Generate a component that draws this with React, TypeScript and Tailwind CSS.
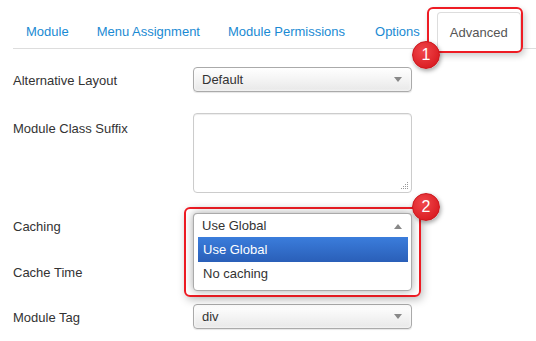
import React from "react";

const font = { fontFamily: '"Liberation Sans", Arial, sans-serif' };

function Arrow({ up = false }: { up?: boolean }) {
  return (
    <svg width="8" height="5" viewBox="0 0 8 5" className="shrink-0">
      {up ? <path d="M0 5 L4 0 L8 5 Z" fill="#888" /> : <path d="M0 0 L8 0 L4 5 Z" fill="#888" />}
    </svg>
  );
}

function Select({ value }: { value: string }) {
  return (
    <div className="flex h-[25px] w-[219px] items-center justify-between rounded-[4px] border border-[#aaa] bg-gradient-to-b from-white via-[#f4f4f4] to-[#e8e8e8] pl-[8px] pr-[9px] text-[13px] text-[#333] shadow-[0_0_3px_#fff_inset,0_1px_1px_rgba(0,0,0,0.1)]">
      <span>{value}</span>
      <Arrow />
    </div>
  );
}

function Badge({ n }: { n: string }) {
  return (
    <div className="absolute flex h-[28px] w-[28px] items-center justify-center rounded-full border border-[#c9161c] bg-[radial-gradient(circle_at_40%_35%,#f0474b,#dc2026_70%,#c8161c)] text-[16px] leading-none text-white shadow-[1px_2px_4px_rgba(0,0,0,0.35)]">
      {n}
    </div>
  );
}

export default function App() {
  const tabs = [
    { t: "Module", m: "mr-[2px]" },
    { t: "Menu Assignment", m: "mr-[2px]" },
    { t: "Module Permissions", m: "mr-[4px]" },
    { t: "Options", m: "mr-[4px]" },
  ];
  return (
    <div className="relative h-[341px] w-[536px] overflow-hidden bg-white text-[13px] text-[#333]" style={font}>
      {/* Tabs */}
      <div className="ml-[13px] mt-[12px] flex h-[37px] border-b border-[#ddd]">
        {tabs.map(({ t, m }) => (
          <div key={t} className={`${m} flex h-[36px] items-center px-[13px] pt-[3px] text-[13px] text-[#1a8ad3]`}>
            {t}
          </div>
        ))}
        <div className="relative -mb-px flex h-[37px] items-center rounded-t-[4px] border border-b-0 border-[#ddd] bg-white px-[12px] pt-[3px] text-[#555]">
          Advanced
        </div>
      </div>

      {/* Form */}
      <div className="pl-[13px]">
        <div className="mt-[18px] flex items-center">
          <div className="w-[180px] pt-[2px]">Alternative Layout</div>
          <Select value="Default" />
        </div>

        <div className="mt-[21px] flex items-start">
          <div className="w-[180px] pt-[6px]">Module Class Suffix</div>
          <div className="relative h-[80px] w-[219px] rounded-[4px] border border-[#ccc] bg-white shadow-[inset_0_1px_1px_rgba(0,0,0,0.075)]">
            <svg width="8" height="8" viewBox="0 0 8 8" className="absolute bottom-[2px] right-[2px]">
              <g fill="#999">
                <rect x="6" y="0" width="1" height="1" />
                <rect x="4" y="2" width="1" height="1" />
                <rect x="6" y="2" width="1" height="1" />
                <rect x="2" y="4" width="1" height="1" />
                <rect x="4" y="4" width="1" height="1" />
                <rect x="6" y="4" width="1" height="1" />
                <rect x="0" y="6" width="1" height="1" />
                <rect x="2" y="6" width="1" height="1" />
                <rect x="4" y="6" width="1" height="1" />
                <rect x="6" y="6" width="1" height="1" />
              </g>
            </svg>
          </div>
        </div>

        <div className="mt-[20px] flex items-center">
          <div className="w-[180px] pt-[2px]">Caching</div>
          <div className="relative z-10">
            <Select value="Use Global" />
            {/* red annotation box */}
            <div className="absolute left-[-9px] top-[-6px] h-[90px] w-[237px] rounded-[6px] border-2 border-[#ee1c24] shadow-[2px_3px_8px_rgba(0,0,0,0.25)]" />
            {/* open dropdown */}
            <div className="absolute left-0 top-0 w-[219px] rounded-[4px] border border-[#aaa] bg-white pb-[4px] shadow-[0_0_8px_rgba(0,0,0,0.35)]">
              <div className="flex h-[23px] items-center justify-between pl-[8px] pr-[9px] pt-[1px]">
                <span>Use Global</span>
                <Arrow up />
              </div>
              <div className="ml-[4px] mr-[3px] flex h-[25px] items-center bg-gradient-to-b from-[#3b7ddc] to-[#2a5fb8] pl-[5px] text-white">
                Use Global
              </div>
              <div className="ml-[4px] mr-[3px] flex h-[24px] items-center pl-[5px]">No caching</div>
            </div>
          </div>
        </div>

        <div className="mt-[21px] flex items-center">
          <div className="w-[180px] pt-[2px]">Cache Time</div>
          <div className="h-[25px] w-[219px] rounded-[4px] border border-[#ccc] bg-white" />
        </div>

        <div className="mt-[20px] flex items-center">
          <div className="w-[180px] pt-[2px]">Module Tag</div>
          <Select value="div" />
        </div>
      </div>

      {/* Annotation 1 */}
      <div className="absolute left-[427px] top-[7px] h-[46px] w-[96px] rounded-[6px] border-2 border-[#ee1c24] shadow-[2px_3px_6px_rgba(0,0,0,0.2)]" />
      <div className="absolute left-[412px] top-[41px]">
        <div className="relative">
          <Badge n="1" />
        </div>
      </div>
      <div className="absolute left-[412px] top-[193px] z-20">
        <div className="relative">
          <Badge n="2" />
        </div>
      </div>
    </div>
  );
}
